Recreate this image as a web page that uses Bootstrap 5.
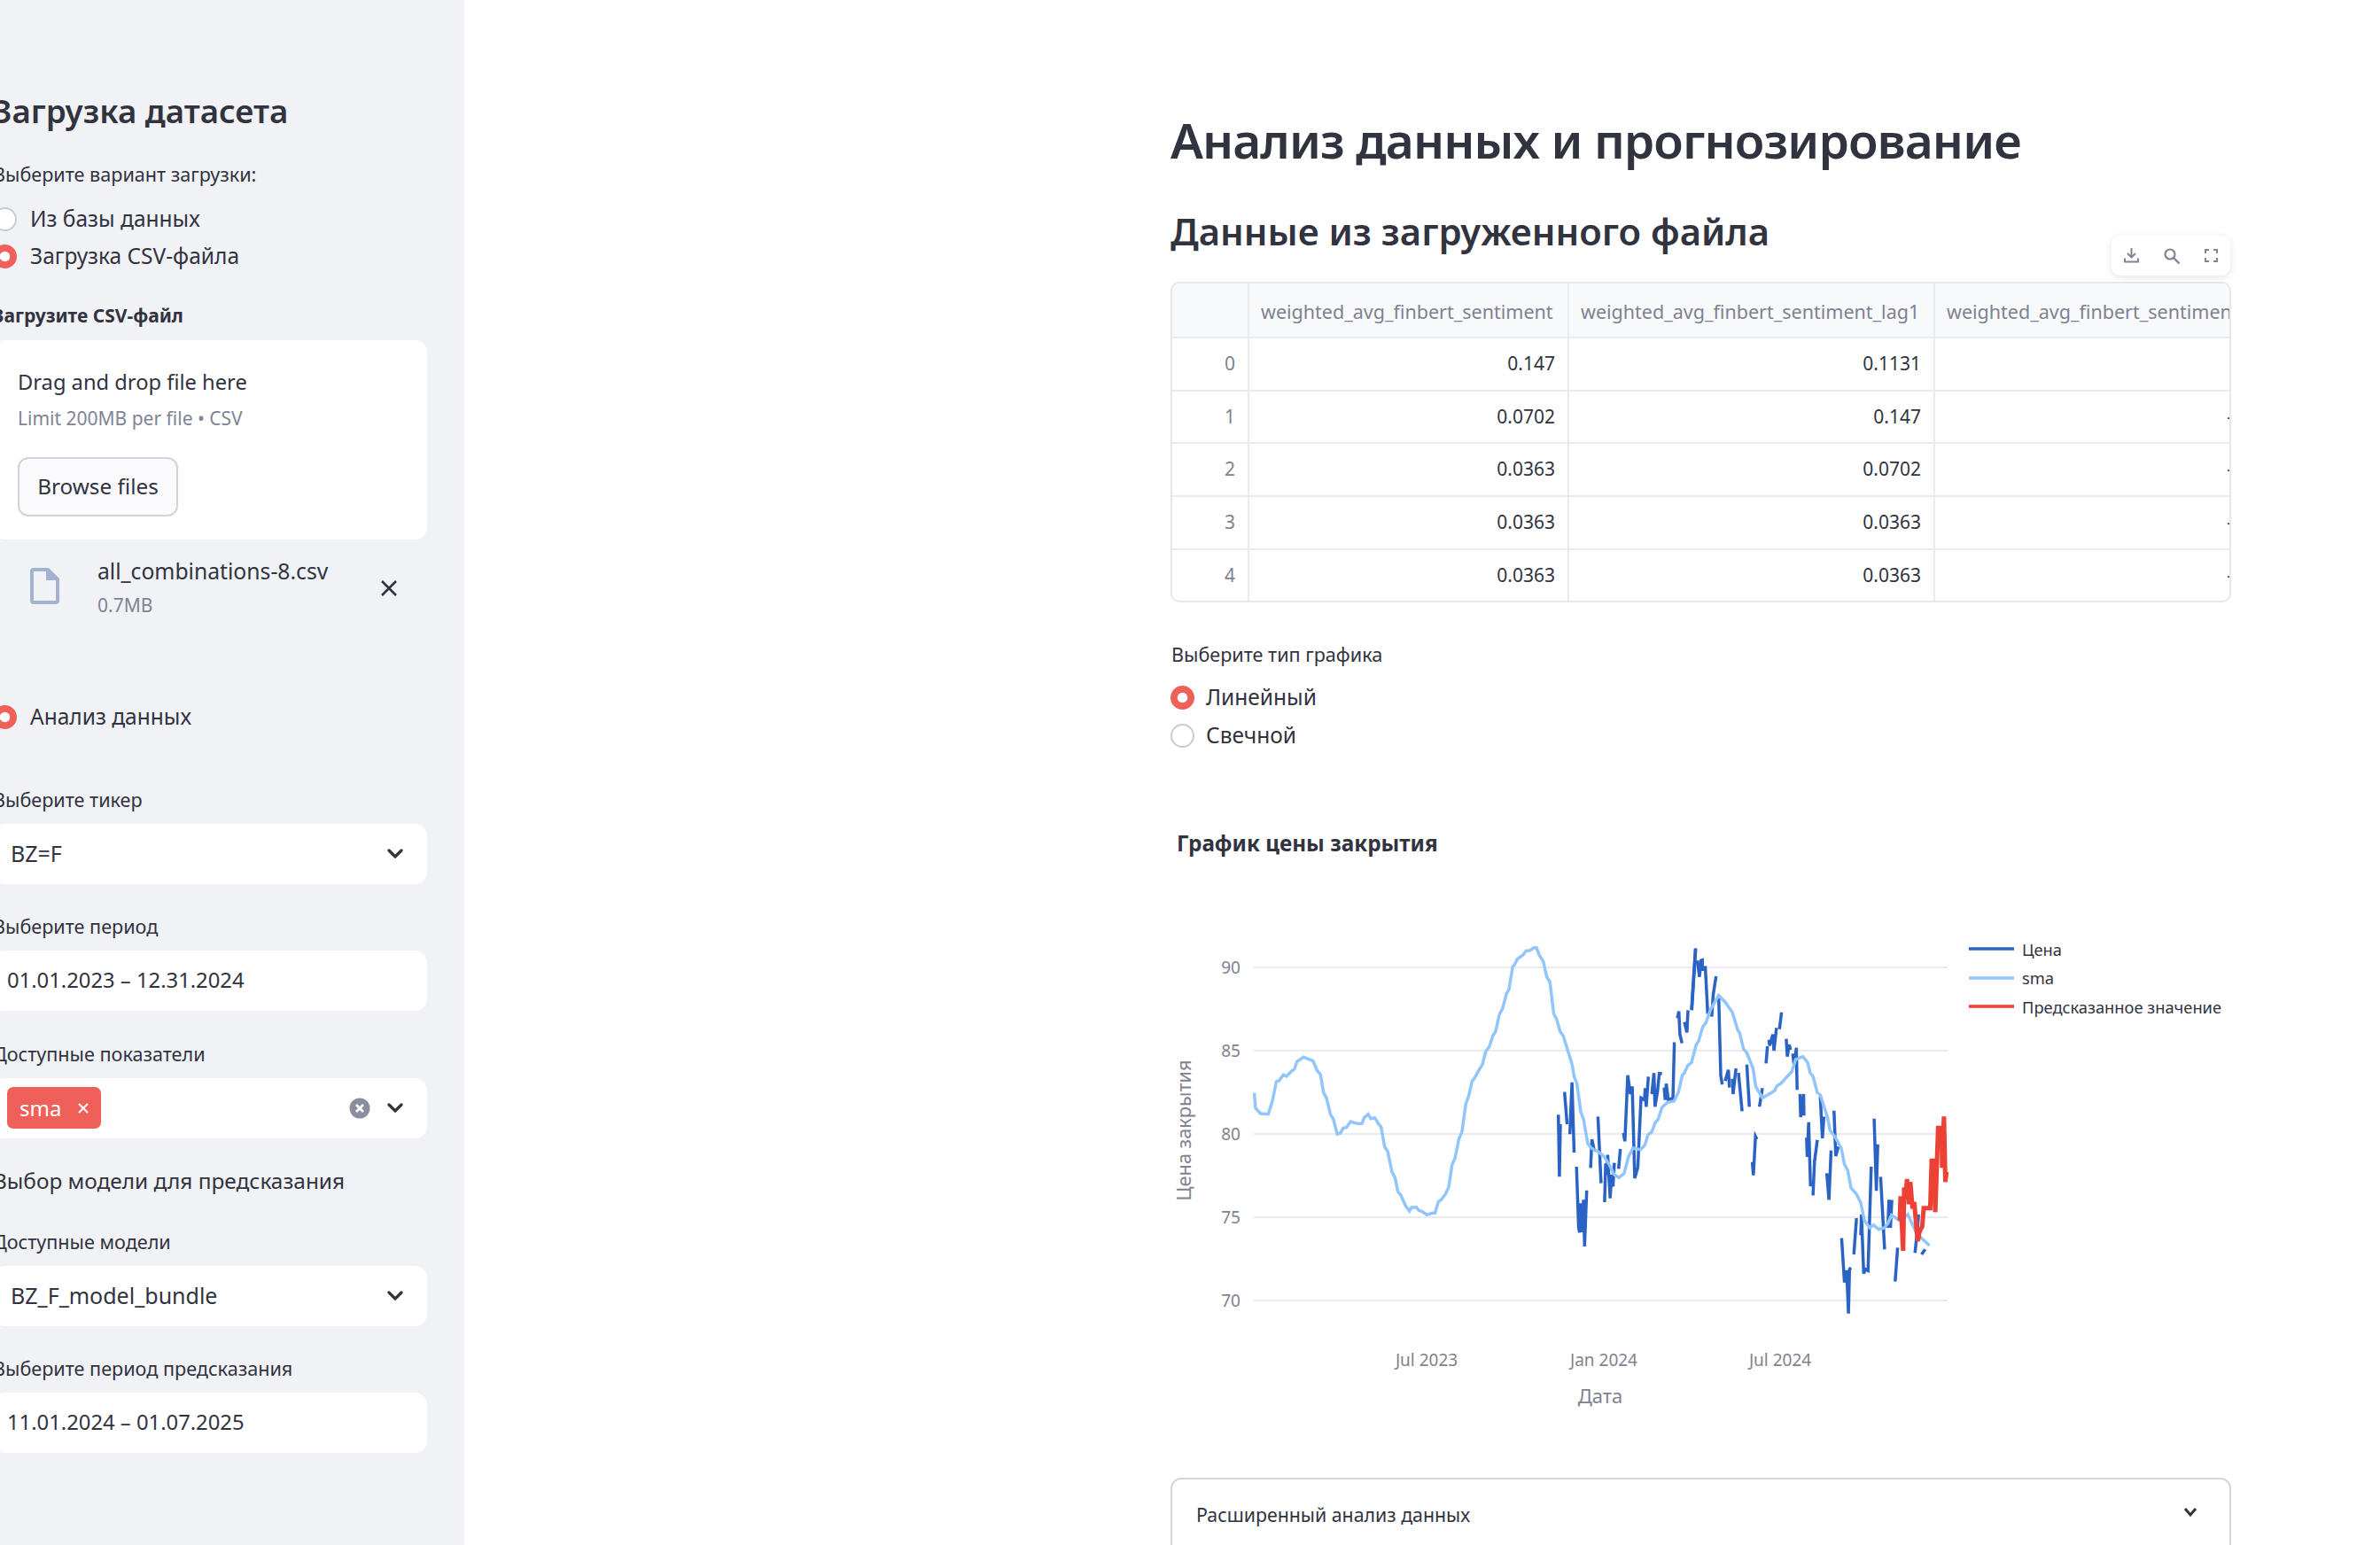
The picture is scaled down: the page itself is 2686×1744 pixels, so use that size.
<!DOCTYPE html>
<html lang="ru">
<head>
  <meta charset="UTF-8">
  <meta name="viewport" content="width=device-width, initial-scale=1.0">
  <title>Анализ данных и прогнозирование</title>
  <link href="https://cdn.jsdelivr.net/npm/bootstrap@5.3.3/dist/css/bootstrap.min.css" rel="stylesheet">
  <style>
    html, body { height: 1744px; overflow: hidden; }
    body { font-family: "Noto Sans", "Open Sans", sans-serif; color: #31333f; background: #fff; font-size: 25px; }

    /* sidebar */
    .side-bar { width: 524px; height: 1744px; background: #f0f2f6; overflow: hidden; flex: none; }
    .side-in { width: 490px; margin-left: -8px; padding-top: 103px; }
    .side-title { font-size: 36.7px; font-weight: 600; line-height: 44px; margin: 0; padding-bottom: 2px; }
    .fld-label { font-size: 21.6px; line-height: 30px; margin-bottom: 12px; }
    .fld-label.bold-lbl { font-size: 21px; font-weight: 700; margin-bottom: 13px; }
    .gap-a { margin-top: 33px; }
    .gap-b { margin-top: 30px; }
    .gap-c { margin-top: 57px; }
    .gap-d { margin-top: 34px; }
    .gap-e { margin-top: 36px; }

    .radio-set { margin-top: 14px; }
    .radio-row { height: 42.5px; display: flex; align-items: center; gap: 15px; font-size: 24.5px; }
    .radio-dot.form-check-input { width: 27px; height: 27px; margin: 0; flex: none; background-color: #fff; border: 2px solid #c9cbd0; background-size: 100%; }
    .radio-dot.form-check-input:checked { background-color: #f0605a; border-color: #f0605a; }
    .radio-gap { margin-top: 69px; }

    .drop-box { height: 225px; background: #fff; border-radius: 14px; padding: 28px; }
    .drop-head { font-size: 23.7px; line-height: 40px; margin-top: -1px; }
    .drop-sub { font-size: 21px; line-height: 32px; color: #808495; margin-top: 5px; }
    .browse-btn.btn { width: 181px; height: 67px; margin-top: 28px; font-size: 24.3px; color: #31333f; background: #fafafc; border: 2px solid #d2d3d8; border-radius: 12px; padding: 0; }
    .file-row { height: 110px; padding-left: 42px; padding-right: 33px; }
    .file-icon { margin-top: 32px; flex: none; }
    .file-text { margin-left: 43px; white-space: nowrap; }
    .file-name { font-size: 24.7px; line-height: 34px; margin-top: 19px; }
    .file-size { font-size: 21px; line-height: 30px; color: #808495; margin-top: 6px; }
    .file-close { margin-top: 45px; }

    .pick-box { height: 68px; background: #fff; border-radius: 14px; padding-left: 20px; padding-right: 27px; }
    .pick-date { padding-left: 16px; font-size: 23.8px; }
    .pick-tag { padding-left: 16px; }
    .tag-chip { width: 106px; height: 47px; background: #f0605a; color: #fff; border-radius: 7px; padding: 0 13px 0 14px; font-size: 24px; }
    .clear-icon { margin-left: auto; margin-right: 19px; }
    .model-head { font-size: 24.4px; line-height: 36px; margin-top: 30px; }

    /* main */
    .main-area { padding-left: 797px; flex: none; width: 2000px; }
    .page-title { font-size: 55px; font-weight: 600; letter-spacing: -.9px; line-height: 76px; margin: 0; padding-top: 120px; }
    .sub-title { font-size: 41.8px; font-weight: 600; line-height: 60px; margin: 35px 0 0; }
    .table-wrap { width: 1197px; height: 362px; margin-top: 27px; border: 2px solid #e6e8ec; border-radius: 10px; overflow: hidden; }
    .data-table { width: 1197px; table-layout: fixed; margin: 0; font-size: 21px; color: #31333f; }
    .data-table th, .data-table td { padding: 0 14px 0 0; border: 0; border-right: 2px solid #e9ebee; border-bottom: 2px solid #e9ebee; height: 59.7px; text-align: right; vertical-align: middle; white-space: nowrap; overflow: hidden; background: transparent; }
    .data-table th { height: 61px; background: #f8f9fb; font-weight: 400; font-size: 21.5px; color: #7f8290; padding: 4px 0 0 13px; text-align: left; }
    .data-table th:nth-child(1) { width: 86px; }
    .data-table th:nth-child(2) { width: 361px; }
    .data-table th:nth-child(3) { width: 413px; }
    .data-table th:nth-child(4) { width: 337px; }
    .data-table td.idx-cell { color: #7f8290; padding-right: 14px; }
    .data-table th:last-child, .data-table td:last-child { border-right: 0; }
    .data-table tr:last-child td { border-bottom: 0; }
    .tool-bar { position: absolute; left: 2383px; top: 266px; width: 134px; height: 45px; background: #fff; border-radius: 10px; box-shadow: 0 2px 8px rgba(40, 44, 60, .12); padding: 0 14px; }

    .plain-label { font-size: 21.6px; line-height: 32px; margin-top: 42.500px; margin-left: 1px; }
    .chart-radios { margin-top: 12px; }
    .chart-radios .radio-row { gap: 13px; }
    .chart-head { font-size: 24.3px; font-weight: 700; line-height: 36px; margin-top: 82px; margin-left: 7px; }
    .chart-svg { display: block; margin-top: 11px; margin-left: -21px; }
    .chart-svg text { font-family: "Noto Sans", sans-serif; fill: #7f8290; }
    .chart-svg .lg-text { fill: #31333f; }
    .fold-box { width: 1197px; height: 120px; margin-top: 7px; border: 2px solid #d4d5d8; border-radius: 12px; padding: 0 35px 35px 27px; font-size: 21.3px; }
    .fold-chev { margin-bottom: 6px; }
  </style>
</head>
<body>
  <div class="d-flex">

    <!-- Sidebar -->
    <div class="side-bar">
      <div class="side-in">
        <h2 class="side-title">Загрузка датасета</h2>

        <div class="fld-label gap-a mb-0">Выберите вариант загрузки:</div>
        <div class="radio-set">
          <label class="radio-row"><input class="form-check-input radio-dot" type="radio" name="src"><span>Из базы данных</span></label>
          <label class="radio-row"><input class="form-check-input radio-dot" type="radio" name="src" checked><span>Загрузка CSV-файла</span></label>
        </div>

        <div class="fld-label bold-lbl gap-b">Загрузите CSV-файл</div>
        <div class="drop-box">
          <div class="drop-head">Drag and drop file here</div>
          <div class="drop-sub">Limit 200MB per file • CSV</div>
          <button class="btn browse-btn" type="button">Browse files</button>
        </div>
        <div class="file-row d-flex align-items-start">
          <svg class="file-icon" width="33" height="41" viewBox="0 0 33 41"><path fill="#a3b2cf" fill-rule="evenodd" d="M4 0H21L33 12V37a4 4 0 0 1-4 4H4a4 4 0 0 1-4-4V4a4 4 0 0 1 4-4zM4 4V37H29V14H18V4z"/></svg>
          <div class="file-text">
            <div class="file-name">all_combinations-8.csv</div>
            <div class="file-size">0.7MB</div>
          </div>
          <svg class="file-close ms-auto" width="20" height="20" viewBox="0 0 20 20"><path d="M2 2l16 16M18 2L2 18" stroke="#31333f" stroke-width="2.600" fill="none"/></svg>
        </div>

        <div class="radio-gap">
          <label class="radio-row"><input class="form-check-input radio-dot" type="radio" name="mode" checked><span>Анализ данных</span></label>
        </div>

        <div class="fld-label gap-c">Выберите тикер</div>
        <div class="pick-box d-flex align-items-center justify-content-between">
          <span>BZ=F</span>
          <svg width="18" height="12" viewBox="0 0 18 12"><path d="M2 2l7 7 7-7" stroke="#31333f" stroke-width="3.200" stroke-linecap="round" stroke-linejoin="round" fill="none"/></svg>
        </div>

        <div class="fld-label gap-a">Выберите период</div>
        <div class="pick-box pick-date d-flex align-items-center">01.01.2023 – 12.31.2024</div>

        <div class="fld-label gap-d">Доступные показатели</div>
        <div class="pick-box pick-tag d-flex align-items-center">
          <div class="tag-chip d-flex align-items-center justify-content-between">
            <span>sma</span>
            <svg width="14" height="14" viewBox="0 0 14 14"><path d="M2 2l10 10M12 2L2 12" stroke="#fff" stroke-width="2" fill="none"/></svg>
          </div>
          <svg class="clear-icon" width="24" height="24" viewBox="0 0 24 24"><circle cx="12" cy="12" r="11.500" fill="#8b8e9d"/><path d="M8 8l8 8M16 8l-8 8" stroke="#fff" stroke-width="2.800"/></svg>
          <svg width="18" height="12" viewBox="0 0 18 12"><path d="M2 2l7 7 7-7" stroke="#31333f" stroke-width="3.200" stroke-linecap="round" stroke-linejoin="round" fill="none"/></svg>
        </div>

        <div class="model-head">Выбор модели для предсказания</div>

        <div class="fld-label gap-e">Доступные модели</div>
        <div class="pick-box d-flex align-items-center justify-content-between">
          <span>BZ_F_model_bundle</span>
          <svg width="18" height="12" viewBox="0 0 18 12"><path d="M2 2l7 7 7-7" stroke="#31333f" stroke-width="3.200" stroke-linecap="round" stroke-linejoin="round" fill="none"/></svg>
        </div>

        <div class="fld-label gap-a">Выберите период предсказания</div>
        <div class="pick-box pick-date d-flex align-items-center">11.01.2024 – 01.07.2025</div>
      </div>
    </div>

    <!-- Main -->
    <div class="main-area">
      <h1 class="page-title">Анализ данных и прогнозирование</h1>
      <h2 class="sub-title">Данные из загруженного файла</h2>

      <div class="table-wrap">
        <table class="table data-table">
          <thead>
            <tr><th></th><th>weighted_avg_finbert_sentiment</th><th>weighted_avg_finbert_sentiment_lag1</th><th>weighted_avg_finbert_sentiment_lag2</th></tr>
          </thead>
          <tbody>
            <tr><td class="idx-cell">0</td><td>0.147</td><td>0.1131</td><td></td></tr>
            <tr><td class="idx-cell">1</td><td>0.0702</td><td>0.147</td><td class="pe-0">-</td></tr>
            <tr><td class="idx-cell">2</td><td>0.0363</td><td>0.0702</td><td class="pe-0">-</td></tr>
            <tr><td class="idx-cell">3</td><td>0.0363</td><td>0.0363</td><td class="pe-0">-</td></tr>
            <tr><td class="idx-cell">4</td><td>0.0363</td><td>0.0363</td><td class="pe-0">-</td></tr>
          </tbody>
        </table>
      </div>

      <div class="tool-bar d-flex align-items-center justify-content-between">
        <svg width="17" height="17" viewBox="0 0 17 17"><path d="M8.500 0v10M4 6l4.500 4.500L13 6M1 11.500v4h15v-4" stroke="#808495" stroke-width="2" fill="none"/></svg>
        <svg width="18" height="18" viewBox="0 0 18 18"><circle cx="7" cy="7" r="5.500" stroke="#808495" stroke-width="2.200" fill="none"/><path d="M11 11l6.500 6.500" stroke="#808495" stroke-width="2.400"/></svg>
        <svg width="15" height="15" viewBox="0 0 15 15"><path d="M1 5V1h4M10 1h4v4M14 10v4h-4M5 14H1v-4" stroke="#808495" stroke-width="2" fill="none"/></svg>
      </div>

      <div class="plain-label">Выберите тип графика</div>
      <div class="chart-radios">
        <label class="radio-row"><input class="form-check-input radio-dot" type="radio" name="kind" checked><span>Линейный</span></label>
        <label class="radio-row"><input class="form-check-input radio-dot" type="radio" name="kind"><span>Свечной</span></label>
      </div>

      <div class="chart-head">График цены закрытия</div>

      <!-- viewBox keeps page coordinates so the traced series stay readable -->
      <svg class="chart-svg" id="chart" width="1220" height="680" viewBox="1300 980 1220 680">
        <g stroke="#e9ebf1" stroke-width="2">
          <line x1="1415" x2="2198" y1="1091" y2="1091"/><line x1="1415" x2="2198" y1="1185" y2="1185"/>
          <line x1="1415" x2="2198" y1="1279" y2="1279"/><line x1="1415" x2="2198" y1="1373" y2="1373"/>
          <line x1="1415" x2="2198" y1="1467" y2="1467"/>
        </g>
        <g font-size="19" text-anchor="end">
          <text x="1400" y="1098">90</text><text x="1400" y="1192">85</text><text x="1400" y="1286">80</text>
          <text x="1400" y="1380">75</text><text x="1400" y="1474">70</text>
        </g>
        <g font-size="19" text-anchor="middle">
          <text x="1610" y="1541">Jul 2023</text><text x="1810" y="1541">Jan 2024</text><text x="2009" y="1541">Jul 2024</text>
        </g>
        <text x="1806" y="1583" font-size="22" text-anchor="middle">Дата</text>
        <text font-size="21.7" text-anchor="middle" transform="translate(1344 1275) rotate(-90)">Цена закрытия</text>
        <g id="series" fill="none"></g>
        <g stroke-width="3.500">
          <line x1="2222" x2="2273" y1="1070" y2="1070" stroke="#2a63c4"/>
          <line x1="2222" x2="2273" y1="1103" y2="1103" stroke="#91c5fb"/>
          <line x1="2222" x2="2273" y1="1135" y2="1135" stroke="#ee4136"/>
        </g>
        <g font-size="18.300">
          <text class="lg-text" x="2282" y="1078">Цена</text>
          <text class="lg-text" x="2282" y="1110">sma</text>
          <text class="lg-text" x="2282" y="1143">Предсказанное значение</text>
        </g>
      </svg>

      <div class="fold-box d-flex align-items-center justify-content-between">
        <span>Расширенный анализ данных</span>
        <svg class="fold-chev" width="18" height="12" viewBox="0 0 18 12"><path d="M3 2l6 7 6-7" stroke="#31333f" stroke-width="3" fill="none"/></svg>
      </div>
    </div>
  </div>

  <script>
    // series traced from the plot, in zoomed crop coordinates
    const L = { ox: 1300, sx: 620 / 1568 };
    const R = { ox: 1900, sx: 640 / 1568 };
    const sma = [
      [L, [292,608,296,660,310,678,332,680,344,636,355,570,363,567,375,547,384,552,398,535,407,527,414,502,433,487,460,500,472,533,481,545,490,608,498,624,510,682,518,697,529,748,538,744,546,727,555,725,567,705,585,712,600,712,606,692,617,680,625,695,636,692,647,713,654,722,664,790,673,806,685,875,694,895,702,942,710,953,724,990,735,1008,741,996,755,995,762,1006,772,1010,785,1021,800,1015,808,1015,818,976,826,970,838,950,847,928,857,850,865,830,876,765,885,740,896,645,904,620,914,568,922,556,935,527,943,513,953,467,963,452,973,415,981,400,992,342,1001,322,1012,272,1019,258,1030,180,1035,175,1043,155,1060,140,1068,127,1080,125,1090,116,1098,117,1105,140,1117,163,1127,215,1136,233,1147,340,1155,358,1165,400,1174,415,1195,495,1200,515,1205,553,1213,575,1224,672,1232,697,1244,780,1252,792,1264,803,1272,805,1290,823,1305,850,1320,885,1333,895,1348,880,1360,825,1373,795,1395,800,1407,785,1416,750,1427,740,1437,708,1445,697,1456,657,1472,640,1490,636,1503,605,1514,548,1522,538]],
      [R, [0,545,12,515,22,505,35,445,42,432,53,385,62,370,75,325,97,278,115,300,135,335,150,395,155,405,166,460,175,472,192,525,200,587,218,625,240,610,252,600,258,585,270,575,300,535,310,495,330,485,343,505,350,540,358,552,370,607,378,615,398,690,405,735,418,755,436,795,445,850,454,870,463,930,478,950,490,980,500,1040,515,1065,525,1055,540,1070,555,1065,565,1050,575,1022,597,1040,620,1020,645,1085,680,1125]]
    ];
    const price = [
      [L, [1160,682,1163,892,1166,714]], [L, [1174,610,1178,610,1185,714]], [L, [1193,748,1199,572,1205,810]],
      [L, [1212,858,1218,1065,1221,1081,1224,982,1228,1080,1232,970,1235,1128,1241,938]],
      [L, [1252,862,1256,765,1262,800]], [L, [1273,688,1282,914]],
      [L, [1292,978,1295,847,1298,885,1301,818,1308,965,1312,885,1316,925,1320,845]],
      [L, [1332,865,1337,798]],
      [L, [1346,744,1350,772,1358,548,1366,612,1371,586,1378,897,1387,860,1396,625,1406,632,1408,592,1411,655,1417,553]],
      [L, [1427,612,1433,541,1436,655,1443,603,1448,542,1456,543]],
      [L, [1462,590,1465,632,1468,577,1474,632,1481,628,1487,628,1491,442,1495,442]],
      [L, [1500,355,1504,332,1507,410,1513,440]], [L, [1520,368,1527,403,1530,328]], [L, [1541,328,1552,118]],
      [R, [22,325,33,120]], [R, [38,160,44,215,48,160,52,158,52,195]], [R, [60,178,67,340]],
      [R, [78,350,82,275,90,213]], [R, [97,275,103,550,107,580]], [R, [115,568,124,530,127,590]],
      [R, [135,560,137,612,145,525]], [R, [152,540,162,670]], [R, [175,512,182,655]], [R, [210,655,218,592]],
      [R, [190,842,193,887,199,755,203,765]], [R, [228,508,232,450]], [R, [236,428,238,448,247,410,250,465,257,388]],
      [R, [265,392,271,335]], [R, [284,425,287,485,292,445,296,462]], [R, [302,475,306,520,312,455,314,598]],
      [R, [322,612,324,690,332,612,333,685]], [R, [340,760,342,825,346,707,351,925]], [R, [358,955,362,840,370,767]],
      [R, [378,620,384,762,388,688]], [R, [396,880,402,970,408,803]], [R, [416,668,421,822,428,790]],
      [R, [437,1100,445,1250,451,1208,456,1355,459,1205,463,1200]], [R, [471,1155,478,1037,482,1037]],
      [R, [490,1090,492,1020,498,1220,503,1205,510,1210,519,858]], [R, [527,695,533,940,537,782]], [R, [545,892,556,1138]],
      [R, [565,1065,568,970,572,1065,576,970]], [R, [585,1247,592,1132]], [R, [640,1150,645,1090,650,1020]], [R, [658,1155,668,1138]]
    ];
    const forecast = [[R, [598,1040,600,958,607,1143,610,928,614,958,618,900,623,985,627,910,633,1000,638,978,645,1080,648,1110,652,1080,660,1060,664,998,682,998,686,838,692,838,696,1012,704,727,714,727,715,862,720,688,724,910,727,875]]];

    const group = document.getElementById("series");
    function draw(list, color, width) {
      list.forEach(([crop, pts]) => {
        const line = document.createElementNS("http://www.w3.org/2000/svg", "polyline");
        let out = [];
        for (let i = 0; i < pts.length; i += 2) {
          out.push((crop.ox + pts[i] * crop.sx).toFixed(1) + "," + (1030 + pts[i + 1] / 3).toFixed(1));
        }
        line.setAttribute("points", out.join(" "));
        line.setAttribute("stroke", color);
        line.setAttribute("stroke-width", width);
        group.appendChild(line);
      });
    }
    draw(price, "#2a63c4", 3.5);
    // sma is flattened into one list so the two crops join up
    draw([[{ ox: 0, sx: 1 }, sma.flatMap(([crop, pts]) => pts.map((v, i) => i % 2 ? v : crop.ox + v * crop.sx))]], "#91c5fb", 3.5);
    draw(forecast, "#ee4136", 5);
  </script>
  <script src="https://cdn.jsdelivr.net/npm/bootstrap@5.3.3/dist/js/bootstrap.bundle.min.js"></script>
</body>
</html>
